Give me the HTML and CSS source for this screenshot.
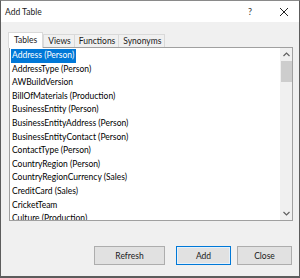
FILE: index.html
```html
<!DOCTYPE html>
<html lang="en">
  <head>
    <meta charset="UTF-8" />
    <title>Add Table</title>
    <link rel="stylesheet" href="styles.css">
  </head>
  <body>
    <div class="window">
      <div class="titlebar">
        <span class="title">Add Table</span>
        <span class="help">?</span>
        <svg class="close-x" width="10" height="10" viewBox="0 0 10 10">
          <path d="M1 1 L9 9 M9 1 L1 9" stroke="#222" stroke-width="1" fill="none" />
        </svg>
      </div>
      <div class="content">
        <div class="tabs">
          <div class="tab active">Tables</div>
          <div class="tab">Views</div>
          <div class="tab">Functions</div>
          <div class="tab">Synonyms</div>
        </div>
        <div class="listbox">
          <ul class="items">
            <li class="selected"><span>Address (Person)</span></li>
            <li>AddressType (Person)</li>
            <li>AWBuildVersion</li>
            <li>BillOfMaterials (Production)</li>
            <li>BusinessEntity (Person)</li>
            <li>BusinessEntityAddress (Person)</li>
            <li>BusinessEntityContact (Person)</li>
            <li>ContactType (Person)</li>
            <li>CountryRegion (Person)</li>
            <li>CountryRegionCurrency (Sales)</li>
            <li>CreditCard (Sales)</li>
            <li>CricketTeam</li>
            <li>Culture (Production)</li>
          </ul>
          <div class="scrollbar">
            <svg class="arrow" width="11" height="11" viewBox="0 0 11 11">
              <path d="M2.5 7 L5.5 4 L8.5 7" stroke="#606060" stroke-width="1.2" fill="none" />
            </svg>
            <div class="thumb"></div>
            <div class="track"></div>
            <svg class="arrow" width="11" height="11" viewBox="0 0 11 11">
              <path d="M2.5 4 L5.5 7 L8.5 4" stroke="#606060" stroke-width="1.2" fill="none" />
            </svg>
          </div>
        </div>
        <div class="buttons">
          <button type="button" class="btn refresh">Refresh</button>
          <button type="button" class="btn default">Add</button>
          <button type="button" class="btn">Close</button>
        </div>
      </div>
    </div>
  </body>
</html>
```

FILE: styles.css
```css
body {
  margin: 0;
  font-family: Lato, "Noto Sans", sans-serif;
  font-size: 8.5px;
  color: #000000;
}

.window {
  width: 300px;
  height: 278px;
  box-sizing: border-box;
  border: 1px solid #5c5c5c;
  border-top-color: #8a8a8a;
  border-bottom-width: 2px;
  background-color: #f0f0f0;
  display: flex;
  flex-direction: column;
}

.titlebar {
  height: 21px;
  background-color: #ffffff;
  display: flex;
  align-items: center;
  padding: 0 10px 0 4px;
}

.title {
  flex: 1;
  font-size: 8.5px;
  color: #1a1a1a;
}

.help {
  font-size: 9px;
  color: #333333;
  margin-right: 27px;
}

.content {
  flex: 1;
  display: flex;
  flex-direction: column;
  padding: 9px 6px 0 7px;
}

.tabs {
  display: flex;
  align-items: flex-end;
  height: 16px;
}

.tab {
  height: 12px;
  line-height: 12px;
  padding: 0 3px 0 4px;
  border: 1px solid #d9d9d9;
  border-bottom: none;
  background-color: #f0f0f0;
  color: #1a1a1a;
  margin-left: -1px;
}

.tab.active {
  height: 15px;
  line-height: 15px;
  padding: 0 5px 0 5px;
  background-color: #ffffff;
  margin-left: 0;
  margin-right: 1px;
  margin-bottom: -1px;
  position: relative;
  z-index: 1;
}

.listbox {
  height: 174px;
  margin-left: 1px;
  box-sizing: border-box;
  border: 1px solid #a0a0a0;
  background-color: #ffffff;
  display: flex;
  overflow: hidden;
}

.items {
  flex: 1;
  list-style: none;
  margin: 0;
  padding: 1px 0 0 1px;
  overflow: hidden;
}

.items li {
  height: 13.6px;
  line-height: 13.6px;
  white-space: nowrap;
  padding-left: 1px;
}

.items li.selected span {
  display: inline-block;
  background-color: #0078d7;
  color: #ffffff;
  padding: 0 2px 0 1px;
  margin-left: -1px;
}

.scrollbar {
  width: 12px;
  background-color: #f0f0f0;
  display: flex;
  flex-direction: column;
  align-items: center;
}

.arrow {
  flex: none;
  margin: 1px 0;
}

.thumb {
  width: 11px;
  height: 21px;
  background-color: #cdcdcd;
}

.track {
  flex: 1;
}

.buttons {
  display: flex;
  justify-content: flex-end;
  gap: 6px;
  margin-top: 25px;
  padding-right: 1px;
}

.btn {
  height: 19px;
  width: 55px;
  box-sizing: border-box;
  border: 1px solid #adadad;
  background-color: #e1e1e1;
  font-family: Lato, "Noto Sans", sans-serif;
  font-size: 8.5px;
  color: #1a1a1a;
  padding: 0;
}

.btn.refresh {
  width: 71px;
  margin-right: 5px;
}

.btn.default {
  border: 1px solid #0078d7;
  box-shadow: inset 0 0 0 1px #e5f1fb;
}
```
